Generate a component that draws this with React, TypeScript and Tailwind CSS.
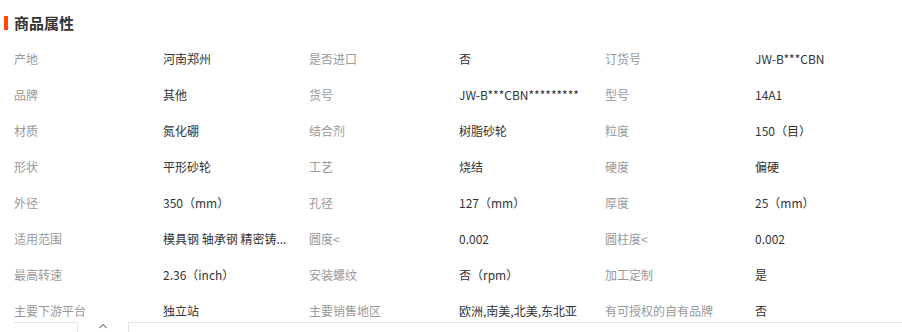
const rows: [string, string, string, string, string, string][] = [
  ["产地", "河南郑州", "是否进口", "否", "订货号", "JW-B***CBN"],
  ["品牌", "其他", "货号", "JW-B***CBN*********", "型号", "14A1"],
  ["材质", "氮化硼", "结合剂", "树脂砂轮", "粒度", "150（目）"],
  ["形状", "平形砂轮", "工艺", "烧结", "硬度", "偏硬"],
  ["外径", "350（mm）", "孔径", "127（mm）", "厚度", "25（mm）"],
  ["适用范围", "模具钢 轴承钢 精密铸...", "圆度<", "0.002", "圆柱度<", "0.002"],
  ["最高转速", "2.36（inch）", "安装螺纹", "否（rpm）", "加工定制", "是"],
  ["主要下游平台", "独立站", "主要销售地区", "欧洲,南美,北美,东北亚", "有可授权的自有品牌", "否"],
];

function Cell({ text, label }: { text: string; label: boolean }) {
  return (
    <div className={label ? "whitespace-nowrap text-[#999]" : "whitespace-nowrap text-[#333]"}>
      {text}
    </div>
  );
}

export default function App() {
  return (
    <div
      className="w-[902px] h-[332px] overflow-hidden bg-white text-[12px] leading-[16px]"
      style={{ fontFamily: '"Noto Sans CJK SC", "Noto Sans", sans-serif' }}
    >
      <div className="flex h-[41px] items-center pl-[4px] pt-[5px]">
        <span className="h-[14px] w-[4px] bg-[#ff4a00]" />
        <h2 className="ml-[6px] text-[15px] font-bold leading-[20px] text-[#333]">商品属性</h2>
      </div>

      <div className="pl-[14px]">
        {rows.map((r, i) => (
          <div
            key={i}
            className={
              "grid grid-cols-[149px_146px_150px_146px_150px_1fr] " +
              (i === rows.length - 1 ? "pt-[10px] pb-[3px]" : "py-[10px]")
            }
          >
            {r.map((t, j) => (
              <Cell key={j} text={t} label={j % 2 === 0} />
            ))}
          </div>
        ))}
      </div>

      <div className="flex h-[10px] pl-[14px]">
        <div className="w-[64px] border-t border-r border-[#e3e3e3]" />
        <div className="flex w-[50px] items-start justify-center pt-[1px]">
          <svg width="10" height="6" viewBox="0 0 10 6" fill="none" stroke="#888" strokeWidth="1.2">
            <path d="M1.5 5 L5 1.5 L8.5 5" />
          </svg>
        </div>
        <div className="flex-1 border-t border-l border-[#e3e3e3]" />
      </div>
    </div>
  );
}
